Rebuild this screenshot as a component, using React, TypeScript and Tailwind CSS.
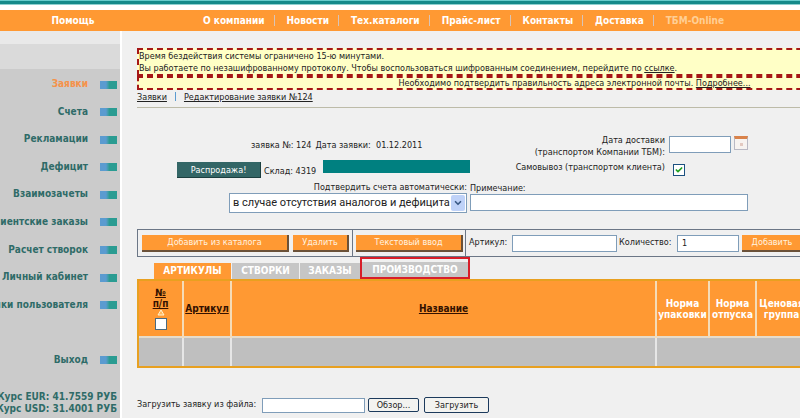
import { ChevronDown, Check } from 'lucide-react';
import type { ReactNode } from 'react';

const navItems = ['О компании', 'Новости', 'Тех.каталоги', 'Прайс-лист', 'Контакты', 'Доставка', 'ТБМ-Online'];

const sideItems = [
  'Заявки',
  'Счета',
  'Рекламации',
  'Дефицит',
  'Взаимозачеты',
  'Клиентские заказы',
  'Расчет створок',
  'Личный кабинет',
  'Настройки пользователя',
  '',
  'Выход',
];

const field = 'border border-[#7f9db9] bg-white px-1 outline-none';

function OrangeButton({ children, width }: { children: ReactNode; width: string }) {
  return (
    <button
      type="button"
      className={`h-[17px] shrink-0 border-r-2 border-b-2 border-[#6b5138] bg-[#ff9933] text-center leading-[14px] text-[#fff3e0] ${width}`}
    >
      {children}
    </button>
  );
}

function Sidebar() {
  return (
    <aside className="flex w-[122px] shrink-0 flex-col overflow-hidden border-r-2 border-white bg-[#cbcbcb] text-[10px] font-bold text-[#2f6b68]">
      <div className="h-[13px] bg-[#e9e9e9]" />
      <div className="h-[25px] bg-[#dadada]" />
      <nav className="mt-px grid h-[303px] auto-rows-fr grid-cols-1">
        {sideItems.map((item, i) => (
          <div key={i} className="flex items-center justify-end gap-3 pr-[3px] whitespace-nowrap">
            {item && (
              <>
                <a href="#" className={i === 0 ? 'text-[#f5924a]' : ''}>
                  {item}
                </a>
                <span className="mt-0.5 h-2 w-[17px] shrink-0 bg-linear-to-r from-[#5b9bd0] from-35% to-[#2a9c92] to-55%" />
              </>
            )}
          </div>
        ))}
      </nav>
      <div className="mt-[18px] flex flex-col items-end pr-[3px] leading-[12px] whitespace-nowrap">
        <span>Курс EUR: 41.7559 РУБ</span>
        <span>Курс USD: 31.4001 РУБ</span>
      </div>
    </aside>
  );
}

function Notices() {
  return (
    <div className="-mr-[204px]">
      <div className="border-2 border-dashed border-[#a51616] bg-[#ffffc6] leading-[12px]">
        <p>Время бездействия системы ограничено 15-ю минутами.</p>
        <p>
          Вы работаете по незашифрованному протоколу. Чтобы воспользоваться шифрованным соединением, перейдите по{' '}
          <a href="#" className="underline">ссылке</a>.
        </p>
      </div>
      <div className="border-2 border-dashed border-[#a51616] bg-[#ffffc6] text-center leading-[10px]">
        Необходимо подтвердить правильность адреса электронной почты.{' '}
        <a href="#" className="underline">Подробнее...</a>
      </div>
    </div>
  );
}

function OrderForm() {
  return (
    <form className="mt-[26px]">
      <div className="mb-0.5 flex h-6">
        <div className="flex w-[333px] shrink-0 items-center gap-1 pl-[114px] whitespace-nowrap">
          <span>заявка №: 124</span>
          <span>Дата заявки:&nbsp; 01.12.2011</span>
        </div>
        <div className="flex w-[278px] shrink-0 justify-end">
          <label htmlFor="date" className="text-right leading-[12px] whitespace-nowrap">
            Дата доставки
            <br />
            (транспортом Компании ТБМ):
          </label>
          <input id="date" className={`mt-0.5 ml-1 h-[17px] w-[62px] ${field}`} />
          <button type="button" aria-label="Календарь" className="mt-0.5 ml-[3px] flex h-[14px] w-[14px] items-center justify-center border border-t-[3px] border-[#b9b9c4] border-t-[#d9824a] bg-[#f7f3f0]">
            <span className="h-[3px] w-[3px] bg-[#e3c9c0]" />
          </button>
        </div>
      </div>
      <div className="flex h-5">
        <div className="flex w-[333px] shrink-0 items-start pl-10 whitespace-nowrap">
          <button type="button" className="mt-[2px] h-4 w-[84px] border-r border-b border-[#1c3f3f] bg-[#336666] leading-[14px] text-white">
            Распродажа!
          </button>
          <span className="mt-1 ml-[3px] w-[59px] leading-[14px]">Склад: 4319</span>
          <span className="h-[13px] flex-1 bg-[#008080]" />
        </div>
        <div className="flex w-[215px] shrink-0 items-start justify-end gap-2">
          <label htmlFor="self" className="leading-[14px] whitespace-nowrap">Самовывоз (транспортом клиента)</label>
          <span className="relative mt-1 h-3 w-3">
            <input id="self" type="checkbox" defaultChecked className="peer block h-3 w-3 appearance-none border border-[#1c5180] bg-white" />
            <Check className="pointer-events-none absolute top-0.5 left-0.5 hidden h-2 w-2 text-[#21a121] peer-checked:block" strokeWidth={5} />
          </span>
        </div>
      </div>
      <div className="mt-[2px] flex gap-[3px]">
        <div className="flex w-[330px] shrink-0 flex-col items-end">
          <label htmlFor="confirm" className="leading-[11px] whitespace-nowrap">Подтвердить счета автоматически:</label>
          <span className="relative w-[238px]">
            <select id="confirm" className="block h-5 w-full appearance-none border border-[#7f9db9] bg-white pl-[3px] font-[Roboto,sans-serif] text-[11px] leading-[18px] outline-none">
              <option>в случае отсутствия аналогов и дефицита</option>
            </select>
            <span className="pointer-events-none absolute top-0.5 right-0.5 flex h-4 w-3.5 items-center justify-center rounded-xs bg-[#bfd2f8] text-[#3a5a86]">
              <ChevronDown size={10} strokeWidth={4} />
            </span>
          </span>
        </div>
        <div className="flex w-[278px] shrink-0 flex-col">
          <label htmlFor="note" className="leading-[12px]">Примечание:</label>
          <input id="note" className={`h-[17px] ${field}`} />
        </div>
      </div>
    </form>
  );
}

function Toolbar() {
  return (
    <div className="mt-4 flex h-7 border border-[#6b7686]">
      <div className="flex w-[214px] shrink-0 items-center gap-1 pl-1">
        <OrangeButton width="w-[147px]">Добавить из каталога</OrangeButton>
        <OrangeButton width="w-[56px]">Удалить</OrangeButton>
      </div>
      <div className="flex w-[114px] shrink-0 items-center border-x border-[#6b7686] pl-[3px]">
        <OrangeButton width="w-[107px]">Текстовый ввод</OrangeButton>
      </div>
      <div className="flex shrink-0 items-center pl-[3px] whitespace-nowrap">
        <label htmlFor="article" className="w-[43px]">Артикул:</label>
        <input id="article" className={`h-[17px] w-[105px] ${field}`} />
        <label htmlFor="qty" className="ml-0.5 w-[58px]">Количество:</label>
        <input id="qty" defaultValue="1" className={`mr-[3px] h-[17px] w-[62px] ${field}`} />
        <OrangeButton width="w-[62px]">Добавить</OrangeButton>
      </div>
    </div>
  );
}

function Tabs() {
  return (
    <div className="flex h-[22px] items-end pl-[17px] text-[10px] leading-[16px] font-bold text-white" role="tablist">
      <button role="tab" aria-selected className="mr-px h-4 w-[77px] bg-[#ff9933]">АРТИКУЛЫ</button>
      <button role="tab" className="mr-px h-4 w-[67px] bg-[#c6c6c6]">СТВОРКИ</button>
      <button role="tab" className="h-4 w-[60px] bg-[#c6c6c6]">ЗАКАЗЫ</button>
      <button role="tab" className="flex h-[22px] w-[110px] flex-col justify-end border-2 border-[#d81e28]">
        <span className="w-full bg-[#c6c6c6] leading-[15px]">ПРОИЗВОДСТВО</span>
      </button>
    </div>
  );
}

function Items() {
  const head = 'border-r-2 border-[#f5dcb8] p-0 align-middle';
  const cell = 'border-r-2 border-[#e6e6e6] p-0';
  return (
    <div className="border-2 border-[#e8a020] bg-[#f7e2b8]">
      <table className="w-full table-fixed border-collapse text-[10px] leading-[11px] font-bold">
        <colgroup>
          <col className="w-[44px]" />
          <col className="w-[48px]" />
          <col />
          <col className="w-[53px]" />
          <col className="w-[47px]" />
          <col className="w-[50px]" />
        </colgroup>
        <thead>
          <tr className="h-[56px] bg-[#ff9933] text-white">
            <th className={`${head} text-[#331100]`}>
              <span className="flex flex-col items-center">
                <a href="#" className="underline">№<br />п/п</a>
                <svg viewBox="0 0 8 7" className="h-[7px] w-2"><path d="M4 1 7 6H1Z" fill="#ffb860" stroke="#fff3d0" /></svg>
                <input type="checkbox" aria-label="Выбрать все" className="mt-0.5 block h-3 w-3 appearance-none border border-[#4a6a80] bg-white" />
              </span>
            </th>
            <th className={`${head} text-[#331100]`}><a href="#" className="underline">Артикул</a></th>
            <th className={`${head} text-[#331100]`}><a href="#" className="underline">Название</a></th>
            <th className={head}>Норма<br />упаковки</th>
            <th className={head}>Норма<br />отпуска</th>
            <th className="p-0">Ценовая<br />группа</th>
          </tr>
        </thead>
        <tbody>
          <tr className="h-[29px] border-t-2 border-[#e6dccb] bg-[#bfbfbf]">
            <td className={cell} />
            <td className={cell} />
            <td className={cell} />
            <td colSpan={3} className="p-0" />
          </tr>
        </tbody>
      </table>
    </div>
  );
}

export default function App() {
  return (
    <div className="flex min-h-screen flex-col overflow-hidden bg-[#f0f0f0] font-['DejaVu_Sans_Condensed','DejaVu_Sans',sans-serif] text-[9px] text-[#222]">
      <div className="h-[5px] border-t border-b border-t-[#6cc] border-b-[#8fd0d0] bg-[#148a8a]" />
      <div className="h-[5px] bg-white" />
      <header className="flex h-[21px] items-center bg-[#ff9933] text-[10px] font-bold whitespace-nowrap text-white">
        <a href="#" className="w-[146px] shrink-0 text-center">Помощь</a>
        <nav className="flex items-center pl-[57px]">
          {navItems.map((item, i) => (
            <span key={item} className="flex items-center">
              {i > 0 && <span className="mr-3 ml-[9px] h-[11px] w-px bg-[#d8c4b8]" />}
              <a href="#" className={i === 6 ? 'text-[#ffcf95]' : ''}>{item}</a>
            </span>
          ))}
        </nav>
      </header>
      <div className="flex flex-1">
        <Sidebar />
        <main className="min-w-0 flex-1 pt-[17px] pl-[15px]">
          <div className="-mr-2">
            <Notices />
            <div className="flex h-[18px] items-start gap-2 border-b border-[#bdbba8] leading-[14px]">
              <a href="#" className="underline">Заявки</a>
              <span className="mt-0.5 h-[9px] w-px bg-[#5b9bd0]" />
              <a href="#" className="underline">Редактирование заявки №124</a>
            </div>
            <OrderForm />
            <Toolbar />
            <Tabs />
            <Items />
            <form className="mt-[29px] flex items-center gap-[3px] whitespace-nowrap">
              <label htmlFor="file" className="w-[122px]">Загрузить заявку из файла:</label>
              <input id="file" className={`h-[15px] w-[103px] ${field}`} />
              <button type="button" className="h-[14px] w-[51px] rounded-xs border border-[#1c3a5c] bg-[#f3f3f0] leading-[12px]">Обзор...</button>
              <button type="submit" className="ml-[2px] h-4 w-[65px] rounded-xs border border-[#1c3a5c] bg-[#f3f3f0] leading-[13px]">Загрузить</button>
            </form>
          </div>
        </main>
      </div>
    </div>
  );
}
